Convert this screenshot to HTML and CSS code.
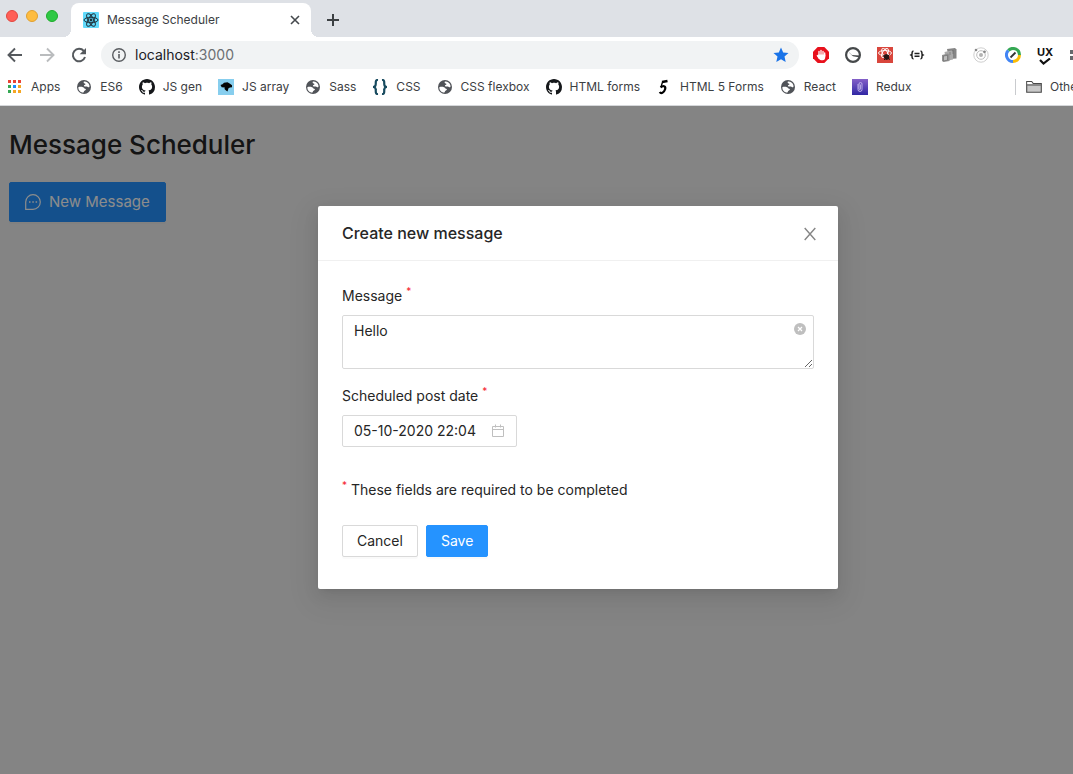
FILE: index.html
```html
<!DOCTYPE html>
<html lang="en">
<head>
<meta charset="utf-8">
<meta name="viewport" content="width=device-width, initial-scale=1">
<title>Message Scheduler</title>
<link rel="stylesheet" href="styles.css">
</head>
<body>
<svg class="symbols" aria-hidden="true">
  <symbol id="globe" viewBox="0 0 16 16">
    <circle cx="8" cy="8" r="7" fill="#505358"/>
    <path fill="#fff" d="M2.300 8.200c1.600-.5 3.400-.4 4.700.1 1 .4 1 1.300 2.100 1.400 1.100.1 1 1.100.1 1.600-.8.400-1.300.8-1.500 1.600-.1.500-.500.900-1.200.7C4 13 2.200 10.900 2.300 8.200zM8.200 2.500c2.300-.1 4.400 1.400 5.100 3.500.4 1.300.2 2.100-.3 2.200-1 .2-1.300-.9-2.200-.8-.9.1-1.900.4-2.600-.2-.8-.7.1-1.300.9-1.500.7-.2.400-.9-.3-1.100-1.300-.4-1.600-1.900-.6-2.100z"/>
  </symbol>
  <symbol id="github" viewBox="0 0 16 16">
    <path fill="#15171a" d="M8 0C3.580 0 0 3.580 0 8c0 3.540 2.290 6.530 5.470 7.590.4.070.55-.17.55-.38 0-.19-.01-.82-.01-1.490-2.010.37-2.530-.49-2.690-.94-.09-.23-.48-.94-.82-1.130-.28-.15-.68-.52-.01-.53.63-.01 1.080.58 1.230.82.72 1.210 1.870.87 2.330.66.070-.52.28-.87.51-1.070-1.780-.2-3.640-.89-3.640-3.950 0-.87.31-1.590.82-2.150-.08-.2-.36-1.020.08-2.120 0 0 .67-.21 2.200.82.64-.18 1.320-.27 2-.27s1.360.09 2 .27c1.530-1.040 2.200-.82 2.200-.82.44 1.100.16 1.920.08 2.120.51.56.82 1.270.82 2.150 0 3.070-1.870 3.750-3.650 3.950.29.25.54.73.54 1.480 0 1.070-.01 1.930-.01 2.200 0 .21.15.46.55.38A8.010 8.010 0 0 0 16 8c0-4.420-3.580-8-8-8z"/>
  </symbol>
</svg>

<div class="browser">
  <div class="tabstrip">
    <div class="lights"><span class="light red"></span><span class="light amber"></span><span class="light green"></span></div>
    <div class="tab">
      <svg class="icon" viewBox="0 0 16 16"><rect width="16" height="16" rx="1" fill="#61dafb"/><g fill="none" stroke="#20323b" stroke-width="1"><ellipse cx="8" cy="8" rx="7" ry="2.700"/><ellipse cx="8" cy="8" rx="7" ry="2.700" transform="rotate(60 8 8)"/><ellipse cx="8" cy="8" rx="7" ry="2.700" transform="rotate(120 8 8)"/></g><circle cx="8" cy="8" r="1.400" fill="#20323b"/></svg>
      <span class="tab-title">Message Scheduler</span>
      <button class="bare" type="button" aria-label="Close tab"><svg class="icon" viewBox="0 0 16 16"><path d="M4 4l8 8M12 4l-8 8" stroke="#45494d" stroke-width="1.600"/></svg></button>
    </div>
    <button class="bare new-tab" type="button" aria-label="New tab"><svg class="icon" viewBox="0 0 16 16"><path d="M8 2v12M2 8h12" stroke="#3c4043" stroke-width="2"/></svg></button>
  </div>

  <div class="toolbar">
    <div class="nav">
      <button class="bare" type="button" aria-label="Back"><svg class="icon" viewBox="0 0 16 16"><path d="M15 8H2M8 1.500L1.500 8 8 14.500" fill="none" stroke="#55595d" stroke-width="1.900"/></svg></button>
      <button class="bare" type="button" aria-label="Forward"><svg class="icon" viewBox="0 0 16 16"><path d="M1 8h13M8 1.500L14.500 8 8 14.500" fill="none" stroke="#babcbe" stroke-width="1.900"/></svg></button>
      <button class="bare" type="button" aria-label="Reload"><svg class="icon" viewBox="0 0 16 16"><path d="M12.800 4A6.200 6.200 0 1 0 14 10" fill="none" stroke="#55595d" stroke-width="2"/><path d="M15 1v6.300H8.700z" fill="#55595d"/></svg></button>
    </div>
    <div class="address">
      <svg class="icon" viewBox="0 0 16 16"><circle cx="8" cy="8" r="6.300" fill="none" stroke="#5a5d61" stroke-width="1.400"/><path d="M8 7v4.500M8 4.300v1.600" stroke="#5a5d61" stroke-width="1.600"/></svg>
      <span class="url">localhost<span class="port">:3000</span></span>
      <button class="bare" type="button" aria-label="Edit bookmark"><svg class="icon" viewBox="0 0 16 16"><path fill="#1a73e8" d="M8 .5l2.200 5 5.300.5-4 3.600 1.200 5.400L8 12.200 3.300 15l1.200-5.400L.5 6l5.300-.5z"/></svg></button>
    </div>
    <div class="extensions">
      <svg class="icon" viewBox="0 0 16 16"><path d="M4.700 0h6.600L16 4.700v6.600L11.300 16H4.700L0 11.300V4.700z" fill="#e8101c"/><path d="M6 8V4.300M8 8V3.300M10 8V4.300M11.700 9V6M4.300 8.500L6 11" stroke="#fff" stroke-width="1.300" stroke-linecap="round"/><path d="M5.400 7.500h6.900V10c0 2-1 3.300-2.700 3.300H8.300C6.800 13.300 5.700 12 4.500 9.500z" fill="#fff"/></svg>
      <svg class="icon" viewBox="0 0 16 16"><circle cx="8" cy="8" r="6.900" fill="#fff" stroke="#45484a" stroke-width="2.200"/><path d="M6.500 8L15 8.500v2L8 9.300z" fill="#45484a"/><path d="M4 5.500l3 2.500" stroke="#c8cacb"/></svg>
      <svg class="icon" viewBox="0 0 16 16"><rect width="16" height="16" fill="#d9463c"/><g fill="none" stroke="#fff" stroke-width=".9"><ellipse cx="8" cy="6" rx="6.500" ry="2.500"/><ellipse cx="8" cy="6" rx="5" ry="2.500" transform="rotate(60 8 6)"/><ellipse cx="8" cy="6" rx="5" ry="2.500" transform="rotate(120 8 6)"/></g><ellipse cx="9.500" cy="10" rx="2.600" ry="3" fill="#241413" transform="rotate(-30 9.500 10)"/><path d="M6 8.500l7 4M7 13l5.500-5.500" stroke="#241413"/></svg>
      <svg class="icon" viewBox="0 0 16 16" fill="none" stroke="#222" stroke-width="1.500"><path d="M4.500 4.300C2.500 4 3.300 7 2.900 7.500L2 8l.9.500c.4.500-.4 3.500 1.600 3.200M11.500 4.300c2-.3 1.200 2.700 1.600 3.200L14 8l-.9.500c-.4.500.4 3.500-1.600 3.200M5.500 6.500h5M5.500 9.300h5"/></svg>
      <svg class="icon" viewBox="0 0 16 16"><path d="M6 2l8-1 1.500 1.500v9L8 12z" fill="#858585"/><path d="M3.500 5l7-1.500 1.500 1v8L5 14z" fill="#aaa"/><path d="M1 8l6-1.500L8.500 8v6L2.500 15 1 14z" fill="#929292"/><path d="M2.500 9l4-.7v4.900l-4 .7zM9 5v3M12 3v4" fill="#bcbcbc" stroke="#666" stroke-width=".6"/></svg>
      <svg class="icon" viewBox="0 0 16 16"><circle cx="8" cy="8" r="7.200" fill="none" stroke="#cfcfcf"/><circle cx="8" cy="8" r="4.300" fill="none" stroke="#bdbdbd"/><circle cx="8" cy="8" r="2" fill="#b3b3b3"/><circle cx="3" cy="3" r="1.300" fill="#888"/><circle cx="11.500" cy="4.800" r="1.400" fill="#888"/></svg>
      <svg class="icon" viewBox="0 0 16 16"><g fill="none" stroke-width="3"><path d="M8 14.500A6.500 6.500 0 0 1 3.400 3.400" stroke="#4285f4"/><path d="M3.400 3.400A6.500 6.500 0 0 1 14.500 8" stroke="#35a853"/><path d="M14.500 8A6.500 6.500 0 0 1 8 14.500" stroke="#fbbc05"/></g><path d="M5.500 10.500l5-5" stroke="#333" stroke-width="1.800"/></svg>
      <span class="ux"><span>UX</span><svg viewBox="0 0 12 7"><path d="M1 2l3.500 3.500L11 .5" fill="none" stroke="#111" stroke-width="2.200"/></svg></span>
      <svg class="icon" viewBox="0 0 16 16" fill="#66696c"><path d="M1 3h8v4H1zM1 9h8v4H1z"/></svg>
    </div>
  </div>

  <nav class="bookmarks" aria-label="Bookmarks">
    <div class="bookmark-list">
      <a href="#"><svg class="icon" viewBox="0 0 16 16"><path fill="#ea4335" d="M1 1h3v3H1zM6 1h3v3H6zM11 1h3v3h-3z"/><path fill="#34a853" d="M1 6h3v3H1zM1 11h3v3H1z"/><path fill="#1a8cff" d="M6 6h3v3H6z"/><path fill="#f5a623" d="M11 6h3v3h-3zM6 11h3v3H6zM11 11h3v3h-3z"/></svg>Apps</a>
      <a href="#"><svg class="icon"><use href="#globe"/></svg>ES6</a>
      <a href="#"><svg class="icon"><use href="#github"/></svg>JS gen</a>
      <a href="#"><svg class="icon" viewBox="0 0 16 16"><path fill="#87ceee" d="M0 0h16v16H0z"/><path fill="#050505" d="M2.500 6l2-.8L6 3.800l3.500-.5L12 4.700l2 1.500v2l-2 .3-1.500.8-1 3.200L8 11.500 6.500 10l.3-1.500-3.100-.2z"/></svg>JS array</a>
      <a href="#"><svg class="icon"><use href="#globe"/></svg>Sass</a>
      <a href="#"><svg class="icon" viewBox="0 0 16 16"><path d="M6 1C3 .7 4 4 3.700 5.500 3.600 7 2.800 8 1 8c1.800 0 2.600 1 2.700 2.500C4 12 3 15.300 6 15M10 1c3-.3 2 3 2.300 4.500.1 1.500.9 2.500 2.700 2.500-1.800 0-2.600 1-2.700 2.500-.3 1.500.7 4.800-2.300 4.500" fill="none" stroke="#174a5e" stroke-width="2.200"/></svg>CSS</a>
      <a href="#"><svg class="icon"><use href="#globe"/></svg>CSS flexbox</a>
      <a href="#"><svg class="icon"><use href="#github"/></svg>HTML forms</a>
      <a href="#"><svg class="icon" viewBox="0 0 16 16" fill="none" stroke="#000"><path d="M6 3l5.500-1" stroke-width="2.300"/><path d="M6.500 3L5 8" stroke-width="1.300"/><path d="M4.500 8.300C8 5.500 10 8 9 10.500 8 13.800 5 15 3.700 13" stroke-width="2.200"/></svg>HTML 5 Forms</a>
      <a href="#"><svg class="icon"><use href="#globe"/></svg>React</a>
      <a href="#"><svg class="icon" viewBox="0 0 16 16"><defs><linearGradient id="violet" x2="0" y2="1"><stop stop-color="#8460c8"/><stop offset="1" stop-color="#3027a4"/></linearGradient></defs><path fill="url(#violet)" d="M0 0h16v16H0z"/><path d="M6 5v5.500a2 2 0 0 0 4 0V5a1.500 1.500 0 0 0-3 0v5a.7.700 0 0 0 1.400 0V5.500" fill="none" stroke="#c6b9ec" stroke-width=".9"/></svg>Redux</a>
    </div>
    <a class="other" href="#"><svg class="icon" viewBox="0 0 16 16"><path d="M.700 13.300V2.500h5l1.600 2h8v8.800z" fill="#c8c8c8" stroke="#4a4a4a" stroke-width="1.100"/><path d="M1.200 6h13.600" stroke="#4a4a4a"/><path d="M1.300 3.100h4l1.200 1.900H1.300z" fill="#fff"/></svg>Other Bookmarks</a>
  </nav>
</div>

<div class="page">
  <main class="content">
    <h1>Message Scheduler</h1>
    <button class="btn primary large" type="button"><svg class="icon" viewBox="0 0 16 16"><path d="M.700 15.300V8A7.300 7.300 0 1 1 8 15.300z" fill="none" stroke="currentColor" stroke-width="1.200"/><path d="M4 7.300h1.500v1.500H4zM7.300 7.300h1.500v1.500H7.300zM10.600 7.300h1.500v1.500h-1.500z" fill="currentColor"/></svg>New Message</button>
  </main>

  <div class="overlay">
    <section class="modal" role="dialog" aria-modal="true" aria-labelledby="dialog-title">
      <header class="modal-head">
        <h2 id="dialog-title">Create new message</h2>
        <button class="bare" type="button" aria-label="Close"><svg class="icon" viewBox="0 0 16 16"><path d="M2.700 3l10.600 12M13.300 3L2.700 15" stroke="#858585" stroke-width="1.400"/></svg></button>
      </header>
      <form class="modal-body">
        <div class="field">
          <label for="message">Message <sup>*</sup></label>
          <div class="textarea-wrap">
            <textarea id="message" rows="2">Hello</textarea>
            <button class="bare clear" type="button" aria-label="Clear"><svg viewBox="0 0 12 12"><circle cx="6" cy="6" r="6" fill="#bfbfbf"/><path d="M4 4l4 4M8 4L4 8" stroke="#fff" stroke-width="1.200"/></svg></button>
          </div>
        </div>
        <div class="field">
          <label for="date">Scheduled post date <sup>*</sup></label>
          <div class="picker">
            <input id="date" type="text" value="05-10-2020 22:04">
            <svg viewBox="0 0 14 14" fill="none" stroke="#bfbfbf"><path d="M1.500 2.500h11v10h-11zM1.500 5.500h11M4.500.5v3M9.500.5v3"/></svg>
          </div>
        </div>
        <p class="note"><sup>*</sup> These fields are required to be completed</p>
        <div class="actions">
          <button class="btn" type="button">Cancel</button>
          <button class="btn primary" type="submit">Save</button>
        </div>
      </form>
    </section>
  </div>
</div>
</body>
</html>
```
FILE: styles.css
```css
* { box-sizing: border-box; }

body {
  margin: 0;
  min-height: 100vh;
  display: flex;
  flex-direction: column;
  font: 14px/22px Inter, "Liberation Sans", sans-serif;
  color: #262626;
  overflow-x: hidden;
}

.symbols { display: none; }
.icon { width: 16px; height: 16px; flex: none; display: block; }

.bare {
  display: block;
  padding: 0;
  border: 0;
  background: none;
  cursor: pointer;
}

/* Browser frame */
.browser {
  background: #fff;
  border-bottom: 1px solid #d5d7da;
  color: #3c4043;
  font-size: 12px;
  line-height: 16px;
}

.tabstrip {
  display: flex;
  height: 37px;
  background: #dee1e6;
}

.lights {
  display: flex;
  gap: 8px;
  padding: 10px 13px 0 6px;
}

.light { width: 12px; height: 12px; border-radius: 50%; border: 1px solid; }
.red { background: #ff5f57; border-color: #e2463f; }
.amber { background: #febc40; border-color: #e0a030; }
.green { background: #2fc845; border-color: #1dad2b; }

.tab {
  display: flex;
  align-items: center;
  gap: 8px;
  width: 240px;
  margin-top: 3px;
  padding: 0 8px 0 12px;
  background: #fff;
  border-radius: 8px 8px 0 0;
  position: relative;
}

.tab::before,
.tab::after {
  content: "";
  position: absolute;
  bottom: 0;
  width: 8px;
  height: 8px;
}

.tab::before { right: 100%; background: radial-gradient(circle at 0 0, transparent 8px, #fff 8px); }
.tab::after { left: 100%; background: radial-gradient(circle at 100% 0, transparent 8px, #fff 8px); }
.tab-title { flex: 1; }
.new-tab { padding: 2px 14px 0; }

.toolbar {
  display: flex;
  align-items: center;
  height: 36px;
  padding-left: 7px;
}

.nav { display: flex; gap: 16px; padding-right: 14px; }

.address {
  flex: 1;
  display: flex;
  align-items: center;
  gap: 8px;
  height: 28px;
  padding: 0 10px;
  border-radius: 14px;
  background: #f1f3f4;
}

.url { flex: 1; font-size: 14px; color: #202124; }
.port { color: #6b6f73; }

.extensions {
  display: flex;
  align-items: center;
  gap: 16px;
  width: 260px;
  margin-left: 14px;
  padding: 4px 0;
  overflow: hidden;
}

.ux {
  flex: none;
  width: 16px;
  display: flex;
  flex-direction: column;
  align-items: center;
  font-size: 11px;
  font-weight: 700;
  line-height: 12px;
  color: #111;
}

.ux svg { width: 12px; height: 7px; }

.bookmarks {
  display: flex;
  align-items: center;
  height: 32px;
  padding: 0 0 4px 7px;
}

.bookmark-list { flex: 1; display: flex; gap: 16px; overflow: hidden; }

.bookmarks a {
  display: flex;
  align-items: center;
  gap: 8px;
  color: inherit;
  text-decoration: none;
  white-space: nowrap;
}

.bookmarks .other {
  width: 58px;
  padding-left: 10px;
  border-left: 1px solid #c9cbce;
  overflow: hidden;
}

/* Application */
.page { flex: 1; position: relative; background: #f0f0f0; }
.content { padding: 20px 9px; }

h1 {
  margin: 0 0 18px;
  font-size: 26px;
  font-weight: 500;
  line-height: 38px;
}

.btn {
  height: 32px;
  padding: 0 14px;
  border: 1px solid #d9d9d9;
  border-radius: 2px;
  background: #fff;
  box-shadow: 0 2px 0 rgba(0, 0, 0, .02);
  font: inherit;
  color: inherit;
  cursor: pointer;
}

.primary { background: #2593ff; border-color: #2593ff; color: #fff; }

.large {
  display: flex;
  align-items: center;
  gap: 8px;
  height: 40px;
  padding: 0 15px;
  font-size: 15px;
}

.overlay {
  position: absolute;
  inset: 0;
  display: flex;
  justify-content: center;
  align-items: flex-start;
  padding: 100px 0 0 83px;
  background: rgba(0, 0, 0, .45);
}

.modal {
  width: 520px;
  max-width: 100%;
  background: #fff;
  border-radius: 2px;
  box-shadow: 0 3px 6px -4px rgba(0, 0, 0, .12), 0 6px 16px rgba(0, 0, 0, .08), 0 9px 28px 8px rgba(0, 0, 0, .05);
}

.modal-head {
  display: flex;
  align-items: center;
  justify-content: space-between;
  padding: 16px 20px 16px 24px;
  border-bottom: 1px solid #f0f0f0;
}

h2 { margin: 0; font-size: 16px; font-weight: 500; line-height: 22px; }

.modal-body { padding: 24px 24px 32px; }
.field { margin-bottom: 16px; }
label { display: block; margin-bottom: 8px; }
sup { color: #f5222d; font-size: 10px; line-height: 0; }

.textarea-wrap { position: relative; }

textarea {
  display: block;
  width: 100%;
  min-height: 54px;
  padding: 4px 30px 4px 11px;
  border: 1px solid #d9d9d9;
  border-radius: 2px;
  font: inherit;
  color: inherit;
  resize: vertical;
}

.clear { position: absolute; top: 8px; right: 8px; }
.clear svg { display: block; width: 12px; height: 12px; }

.picker {
  display: flex;
  align-items: center;
  width: 175px;
  height: 32px;
  padding: 0 11px;
  border: 1px solid #d9d9d9;
  border-radius: 2px;
}

.picker input {
  flex: 1;
  min-width: 0;
  padding: 0;
  border: 0;
  outline: 0;
  background: none;
  font: inherit;
  color: inherit;
}

.picker svg { width: 14px; height: 14px; flex: none; }

.note { margin: 32px 0 24px; }
.actions { display: flex; gap: 8px; }
```
